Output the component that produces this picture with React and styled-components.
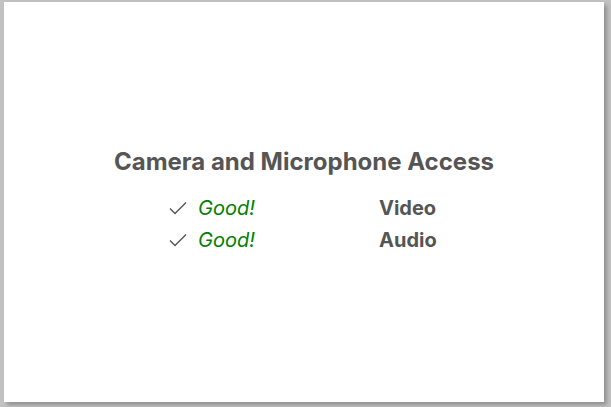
import React from 'react';
import styled, { createGlobalStyle } from 'styled-components';

const GlobalStyle = createGlobalStyle`
  html, body {
    margin: 0;
    padding: 0;
    background: #c2c2c2;
  }
  body {
    font-family: Inter, "Noto Sans", sans-serif;
  }
`;

const checks = [
  { label: 'Video', status: 'Good!' },
  { label: 'Audio', status: 'Good!' },
];

const App = () => {
  return (
    <>
      <GlobalStyle />
      <Page>
        <Card>
          <Title>Camera and Microphone Access</Title>
          <List>
            {checks.map((c) => (
              <Row key={c.label}>
                <Status>
                  <CheckIcon viewBox="0 0 18 14">
                    <path d="M1 7.5 L6 12.5 L17 1.5" />
                  </CheckIcon>
                  <Good>{c.status}</Good>
                </Status>
                <Device>{c.label}</Device>
              </Row>
            ))}
          </List>
        </Card>
      </Page>
    </>
  );
};

const Page = styled.div`
  width: 611px;
  height: 407px;
  padding: 2px 0 0 4px;
  box-sizing: border-box;
`;

const Card = styled.section`
  width: 600px;
  height: 400px;
  box-sizing: border-box;
  padding-bottom: 4px;
  background: #fff;
  box-shadow: 3px 3px 4px rgba(0, 0, 0, 0.25);
  display: flex;
  flex-direction: column;
  align-items: center;
  justify-content: center;
  color: #555;
`;

const Title = styled.h1`
  margin: 0 0 19px;
  font-size: 24px;
  font-weight: 700;
  color: #555;
`;

const List = styled.div`
  display: flex;
  flex-direction: column;
  gap: 6px;
`;

const Row = styled.div`
  display: grid;
  grid-template-columns: 210px 60px;
  align-items: center;
  height: 26px;
`;

const Status = styled.div`
  display: flex;
  align-items: center;
  gap: 11px;
`;

const CheckIcon = styled.svg`
  width: 18px;
  height: 14px;
  fill: none;
  stroke: #555;
  stroke-width: 1.4;
`;

const Good = styled.span`
  font-size: 20px;
  font-style: italic;
  color: #008000;
`;

const Device = styled.span`
  font-size: 20px;
  font-weight: 700;
  color: #555;
`;

export default App;
